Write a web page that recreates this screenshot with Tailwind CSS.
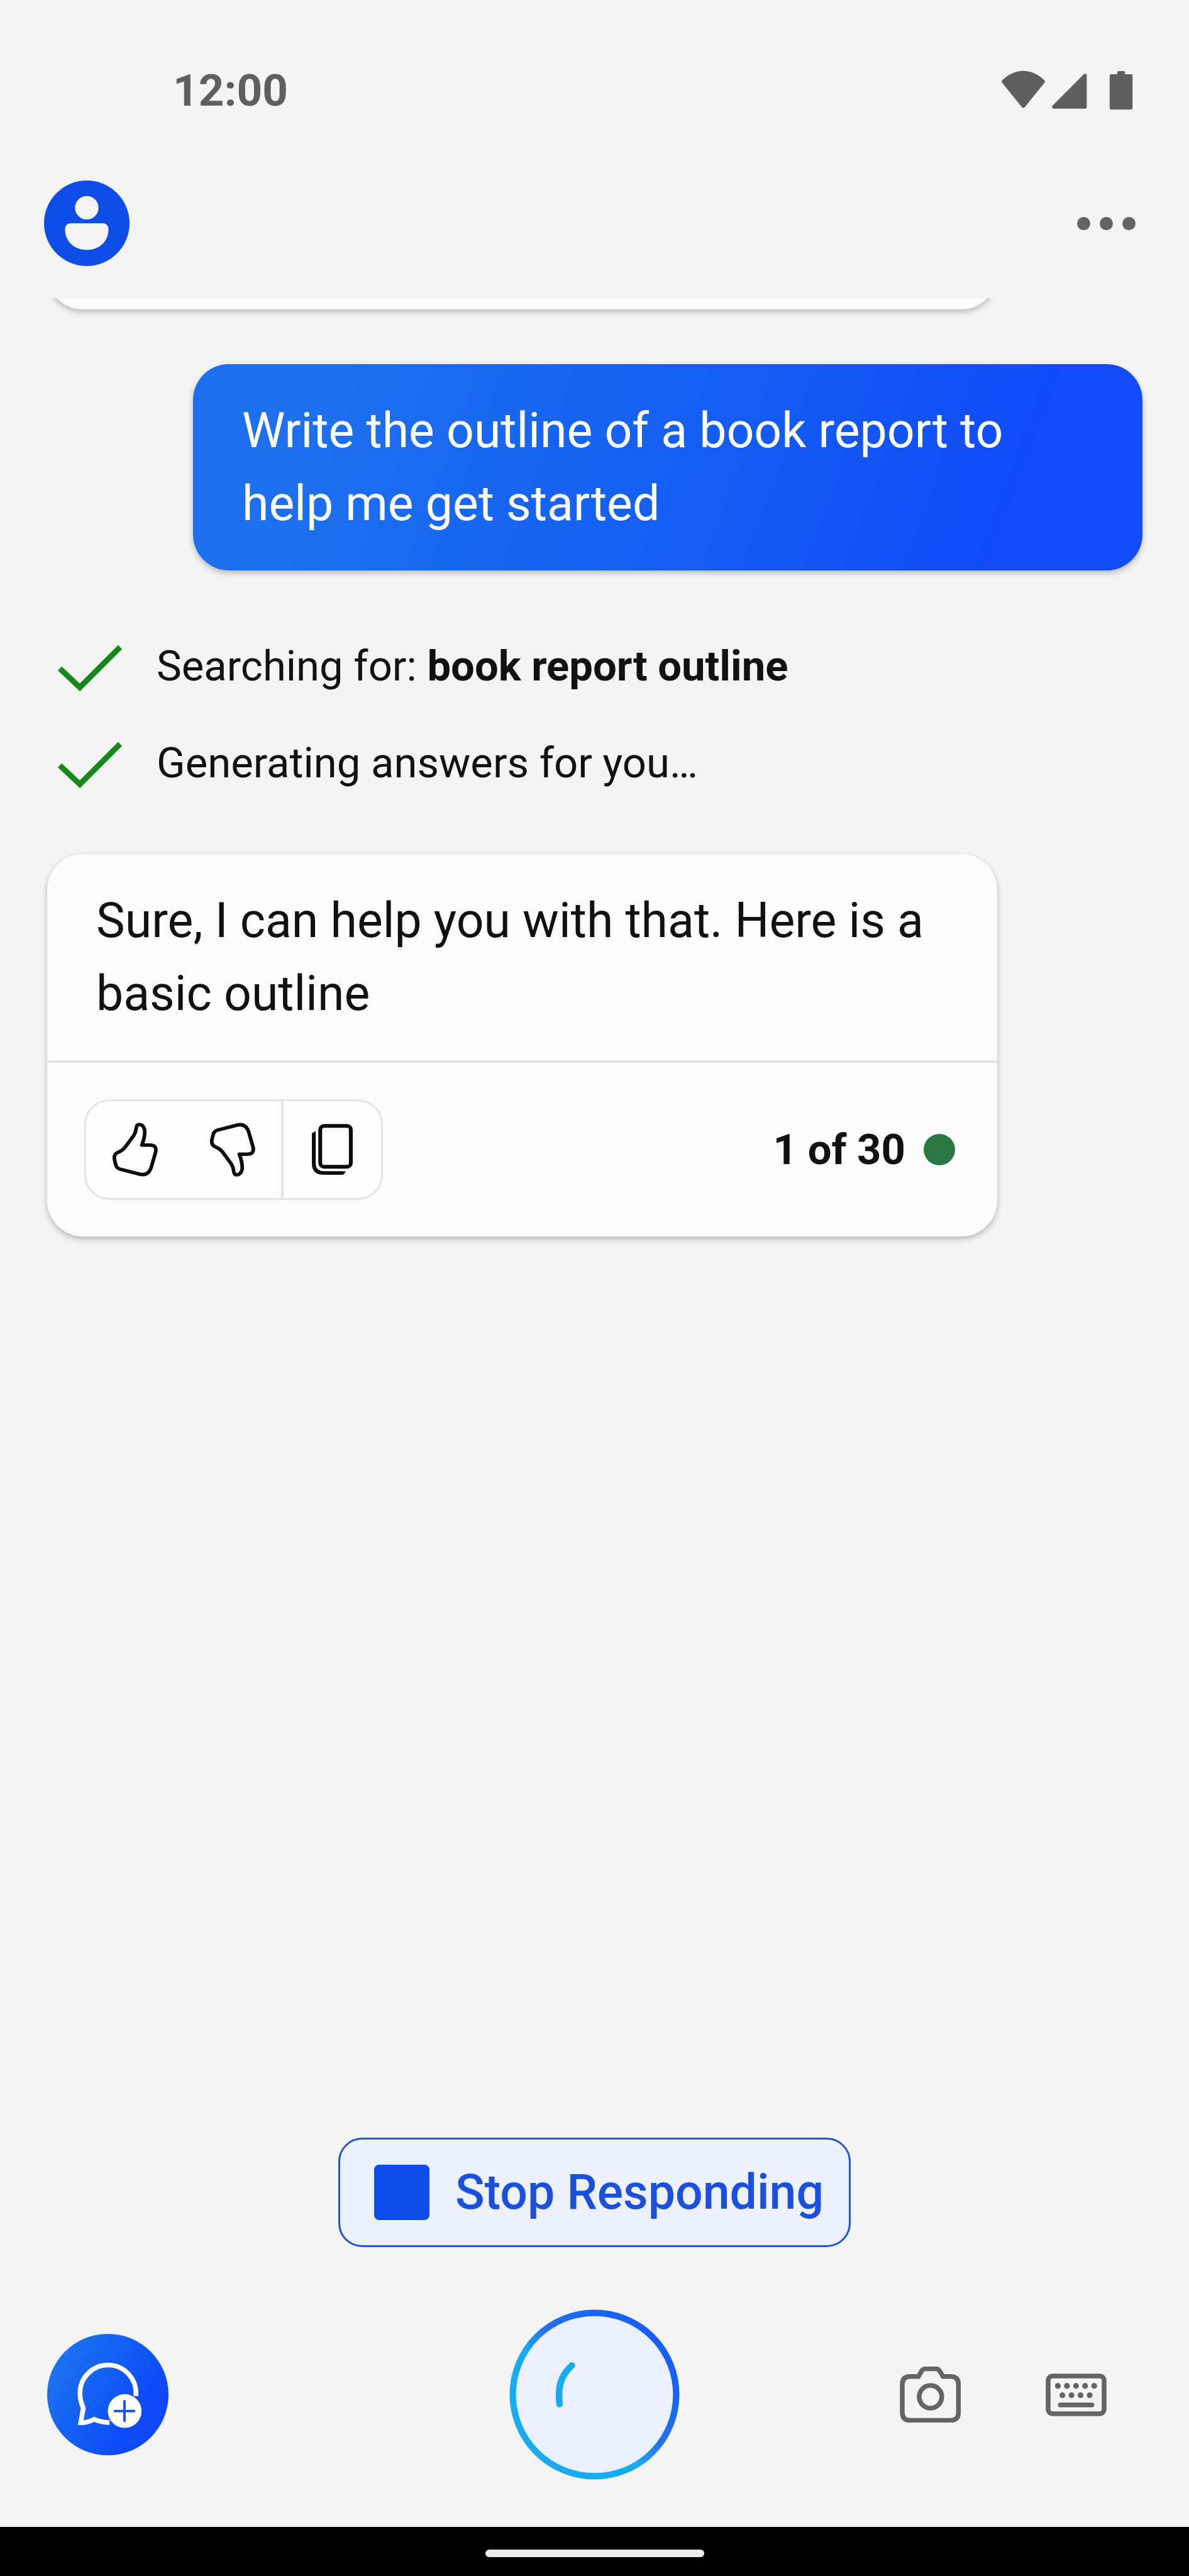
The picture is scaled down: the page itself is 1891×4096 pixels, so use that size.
<!DOCTYPE html>
<html lang="en">
<head>
    <meta charset="UTF-8">
    <meta name="viewport" content="width=device-width, initial-scale=1.0">
    <title>Chat</title>
    <script src="https://cdn.jsdelivr.net/npm/@tailwindcss/browser@4"></script>
</head>
<body class="bg-[#f4f4f4] text-[#111111] font-[Roboto,sans-serif] min-h-screen flex flex-col">
    <!-- Status bar -->
    <div class="h-[236px] pt-[52px] pl-[275px] pr-[89px] flex items-center justify-between text-[#5f5f5f]">
        <span class="text-[71px] leading-[92px] font-bold">12:00</span>
        <div class="flex items-center">
            <svg class="w-[69px] h-[64px]" viewBox="170 165 210 195" fill="currentColor" aria-hidden="true">
                <path d="M173 212 Q220 167 275 167 T377 212 Q382 218 377 225 L282 343 Q275 349 268 343 L173 225 Q168 218 173 212Z"/>
            </svg>
            <svg class="w-[56px] h-[64px] ml-[11px]" viewBox="415 165 171 195" fill="currentColor" aria-hidden="true">
                <path d="M570 183 Q577 178 584 185 V344 Q584 350 578 350 H423 Q416 350 416 343 V337Z"/>
            </svg>
            <svg class="w-[38px] h-[64px] ml-[35px]" viewBox="693 165 115 195" fill="currentColor" aria-hidden="true">
                <path d="M732 183 V175 Q732 168 739 168 H762 Q769 168 769 175 V183 H799 Q806 183 806 190 V348 Q806 355 799 355 H702 Q695 355 695 348 V190 Q695 183 702 183Z"/>
            </svg>
        </div>
    </div>

    <header class="h-[238px] pl-[70px] pr-[85px] flex items-center justify-between">
        <button type="button" aria-label="Profile" class="size-[136px] rounded-full bg-[#0f4de8]">
            <svg class="size-full" viewBox="0 0 138 138" fill="#f4f4f4" aria-hidden="true">
                <circle cx="69" cy="44" r="19"/>
                <path d="M44 69 H94 Q104 69 104 79 C104 98 90 112 69 112 C48 112 34 98 34 79 Q34 69 44 69Z"/>
            </svg>
        </button>
        <button type="button" aria-label="More options" class="flex gap-[15px]">
            <span class="size-[21px] rounded-full bg-[#616364]"></span>
            <span class="size-[21px] rounded-full bg-[#616364]"></span>
            <span class="size-[21px] rounded-full bg-[#616364]"></span>
        </button>
    </header>

    <!-- Conversation -->
    <main class="flex-1 pl-[75px] pr-[74px] overflow-hidden flex flex-col">
        <div class="h-[120px] -mt-[102px] shrink-0 w-full max-w-[1511px] rounded-[57px] bg-[#fcfcfc] shadow-[0_4px_10px_rgba(0,0,0,0.25)]"></div>

        <div class="mt-[87px] self-end w-full max-w-[1510px] rounded-[57px] py-[48px] px-[78px] bg-linear-110 from-[#1e6fee] from-15% to-[#124bf7] to-85% shadow-[0_4px_10px_rgba(0,0,0,0.25)]">
            <p class="text-[77px] leading-[116px] text-white">Write the outline of a book report to<br>help me get started</p>
        </div>

        <ul class="mt-[75px] pl-[17px] text-[67px] leading-[154px]">
            <li class="flex items-center gap-[55px]">
                <svg class="w-[102px] h-[80px]" viewBox="0 0 102 80" fill="none" stroke="#17891b" stroke-width="9" aria-hidden="true">
                    <path d="M3 44 L35 74 L99 10"/>
                </svg>
                <span>Searching for: <b>book report outline</b></span>
            </li>
            <li class="flex items-center gap-[55px]">
                <svg class="w-[102px] h-[80px]" viewBox="0 0 102 80" fill="none" stroke="#17891b" stroke-width="9" aria-hidden="true">
                    <path d="M3 44 L35 74 L99 10"/>
                </svg>
                <span>Generating answers for you…</span>
            </li>
        </ul>

        <article class="mt-[68px] w-full max-w-[1511px] rounded-[57px] bg-[#fcfcfc] shadow-[0_4px_10px_rgba(0,0,0,0.25)]">
            <p class="py-[48px] px-[78px] text-[77px] leading-[116px]">Sure, I can help you with that. Here is a<br>basic outline</p>
            <footer class="border-t-4 border-[#e4e4e4] pt-[58px] pb-[58px] pl-[59px] pr-[67px] flex items-center justify-between">
                <div class="flex rounded-[40px] border-3 border-[#e4e4e4] bg-[#fefefe]">
                    <button type="button" aria-label="Like" class="w-[155px] h-[154px] flex items-center justify-center">
                        <svg class="w-[72px] h-[86px]" viewBox="209 181 212 262" preserveAspectRatio="none" fill="none" stroke="#0c0c0c" stroke-width="17" stroke-linejoin="round" aria-hidden="true">
                            <path d="M333 190 Q322 190 320 208 Q318 228 308 244 L275 290 Q262 311 243 321 L231 327 Q214 337 218 359 L223 382 Q227 402 245 407 L333 430 Q376 442 390 398 L411 323 Q417 290 385 290 L346 290 Q363 246 359 215 Q353 190 333 190Z"/>
                        </svg>
                    </button>
                    <button type="button" aria-label="Dislike" class="w-[155px] h-[154px] flex items-center justify-center">
                        <svg class="w-[72px] h-[86px] -scale-y-100" viewBox="209 181 212 262" preserveAspectRatio="none" fill="none" stroke="#0c0c0c" stroke-width="17" stroke-linejoin="round" aria-hidden="true">
                            <path d="M333 190 Q322 190 320 208 Q318 228 308 244 L275 290 Q262 311 243 321 L231 327 Q214 337 218 359 L223 382 Q227 402 245 407 L333 430 Q376 442 390 398 L411 323 Q417 290 385 290 L346 290 Q363 246 359 215 Q353 190 333 190Z"/>
                        </svg>
                    </button>
                    <button type="button" aria-label="Copy" class="w-[159px] h-[154px] border-l-4 border-[#e4e4e4] flex items-center justify-center">
                        <svg class="w-[65px] h-[86px]" viewBox="1140 187 191 262" preserveAspectRatio="none" fill="none" stroke="#0c0c0c" stroke-width="18" aria-hidden="true">
                            <rect x="1179" y="203" width="143" height="198" rx="18"/>
                            <path d="M1149 237 V384 Q1149 431 1195 431 H1285"/>
                            <path d="M1285 440 Q1294 434 1299 423 H1283Z" fill="#0c0c0c" stroke="none"/>
                            <path d="M1141 244 Q1145 233 1158 228 V244Z" fill="#0c0c0c" stroke="none"/>
                        </svg>
                    </button>
                </div>
                <div class="flex items-center gap-[29px]">
                    <span class="text-[67px] leading-[80px] font-bold">1 of 30</span>
                    <span class="size-[50px] rounded-full bg-[#2a7744]"></span>
                </div>
            </footer>
        </article>
    </main>

    <div class="flex justify-center">
        <button type="button" class="h-[174px] pl-[54px] pr-[40px] flex items-center gap-[41px] rounded-[38px] border-3 border-[#1f57cf] bg-[#edf1fd] text-[#1a50dc] text-[77px] leading-[116px] font-medium">
            <span class="size-[88px] rounded-[8px] bg-[#0f4dea]"></span>
            Stop Responding
        </button>
    </div>

    <!-- Input bar -->
    <div class="pt-[99px] pb-[75px] px-[75px] grid grid-cols-[1fr_auto_1fr] items-center text-[#636565]">
        <button type="button" aria-label="New topic" class="size-[193px] rounded-full bg-linear-120 from-[#1e6ff0] from-15% to-[#0f48f8] to-75%">
            <svg class="size-full" viewBox="110 145 590 590" fill="none" aria-hidden="true">
                <path d="M541 447 A136 136 0 1 0 270 440 Q271 475 286 505 L273 577 Q305 578 338 560 Q370 574 413 577" stroke="white" stroke-width="23"/>
                <circle cx="487" cy="520" r="82" fill="white"/>
                <path d="M439 520 H533 M486 472 V568" stroke="#1a55d8" stroke-width="12" stroke-linecap="round"/>
            </svg>
        </button>
        <button type="button" aria-label="Listening">
            <svg class="size-[271px]" viewBox="103 87 828 828" fill="none" aria-hidden="true">
                <defs>
                    <linearGradient id="ring" x1="0" y1="1" x2="1" y2="0">
                        <stop offset="0.42" stop-color="#19abf1"/>
                        <stop offset="0.55" stop-color="#2570ee"/>
                        <stop offset="0.85" stop-color="#155ff7"/>
                    </linearGradient>
                </defs>
                <circle cx="517" cy="501" r="397" fill="#eaf0fd" stroke="url(#ring)" stroke-width="31"/>
                <path d="M407 360 C355 405 338 460 347 547" stroke="#19abf1" stroke-width="32" stroke-linecap="round"/>
            </svg>
        </button>
        <div class="justify-self-end mr-[56px] flex items-center gap-[135px]">
            <button type="button" aria-label="Camera">
                <svg class="w-[97px] h-[89px]" viewBox="101 120 296 272" fill="none" stroke="currentColor" stroke-width="23" aria-hidden="true">
                    <path d="M192 168 L206 143 Q213 131 227 131 H276 Q289 131 296 143 L311 168 H348 Q386 168 386 206 V343 Q386 381 348 381 H151 Q113 381 113 343 V206 Q113 168 151 168Z"/>
                    <circle cx="250" cy="267" r="55"/>
                </svg>
            </button>
            <button type="button" aria-label="Keyboard">
                <svg class="w-[97px] h-[68px]" viewBox="807 155 295 207" fill="none" stroke="currentColor" stroke-width="23" aria-hidden="true">
                    <rect x="819" y="167" width="271" height="183" rx="22"/>
                    <path d="M878 307 H1031" stroke-linecap="round"/>
                    <path d="M866 215h0M910 215h0M954 215h0M998 215h0M1042 215h0M888 260h0M932 260h0M976 260h0M1020 260h0" stroke-width="28" stroke-linecap="round"/>
                </svg>
            </button>
        </div>
    </div>

    <!-- System gesture bar -->
    <div class="h-[78px] pt-[6px] bg-black flex items-center justify-center">
        <div class="w-[348px] h-[12px] rounded-full bg-[#ececec]"></div>
    </div>
</body>
</html>
